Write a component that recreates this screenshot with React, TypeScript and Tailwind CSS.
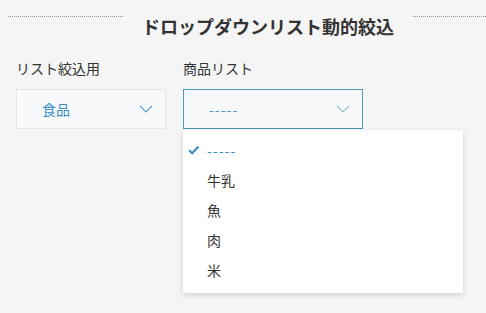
import React from 'react';

const Chevron: React.FC<{ color: string }> = ({ color }) => (
  <svg width="14" height="8" viewBox="0 0 14 8" fill="none">
    <path d="M1 1l6 6 6-6" stroke={color} strokeWidth="1.1" />
  </svg>
);

const items = ['-----', '牛乳', '魚', '肉', '米'];

const App: React.FC = () => {
  return (
    <div
      className="w-[486px] h-[313px] bg-[#f5f5f5] overflow-hidden text-[#333]"
      style={{ fontFamily: '"Noto Sans CJK JP", "Noto Sans", sans-serif' }}
    >
      <div className="flex items-center pl-2 pt-[14px]">
        <div className="w-[115px] border-t border-dotted border-[#999] self-start mt-[2px]"></div>
        <h1 className="mx-[19px] text-[18px] font-bold leading-[24px] text-[#333]">
          ドロップダウンリスト動的絞込
        </h1>
        <div className="flex-1 border-t border-dotted border-[#999] self-start mt-[2px]"></div>
      </div>

      <div className="flex gap-[17px] px-4 mt-[20px]">
        <div className="flex flex-col">
          <label className="text-[14px] leading-[20px] text-[#333]">リスト絞込用</label>
          <div className="mt-[11px] w-[150px] h-[40px] bg-[#f7f9fb] border border-[#e4e8eb] flex items-center justify-between pl-[25px] pr-[12px]">
            <span className="text-[14px] text-[#3b8ec4]">食品</span>
            <Chevron color="#5a9fd0" />
          </div>
        </div>
        <div className="flex flex-col relative">
          <label className="text-[14px] leading-[20px] text-[#333]">商品リスト</label>
          <div className="mt-[11px] w-[180px] h-[40px] bg-[#f7f9fb] border border-[#4b9bb9] flex items-center justify-between pl-[25px] pr-[12px]">
            <span className="text-[14px] text-[#4b9bb9] tracking-[1px]">-----</span>
            <Chevron color="#8fc3d4" />
          </div>
          <ul className="absolute left-0 top-[72px] w-[280px] bg-white pt-[5px] pb-[8px] shadow-[0_2px_6px_rgba(0,0,0,0.15)] z-10">
            {items.map((it, i) => (
              <li key={it} className="h-[30px] flex items-center pl-[5px] text-[14px] text-[#333]">
                <span className="w-[19px] flex items-center">
                  {i === 0 && (
                    <svg width="12" height="10" viewBox="0 0 12 10">
                      <path d="M1.2 5.2l3 3 6.3-6.6" stroke="#3b8ec4" strokeWidth="2.2" fill="none" />
                    </svg>
                  )}
                </span>
                <span className={i === 0 ? 'text-[#3b8ec4] tracking-[1px]' : ''}>{it}</span>
              </li>
            ))}
          </ul>
        </div>
      </div>
    </div>
  );
};

export default App;
